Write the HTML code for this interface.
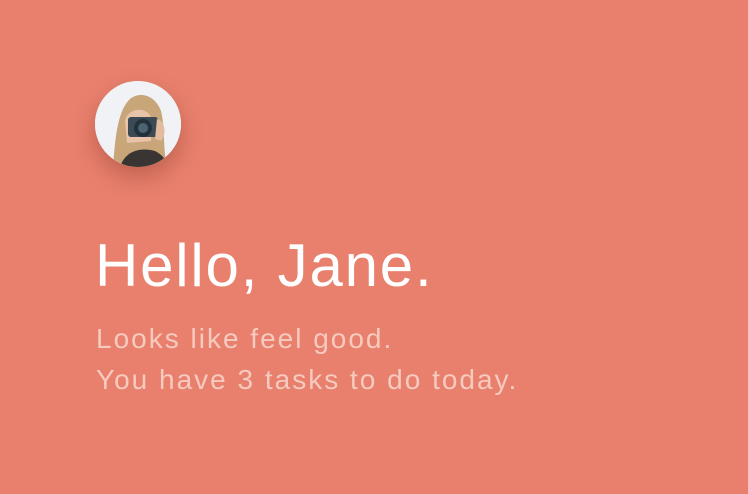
<!DOCTYPE html>
<html><head><style>
html,body{margin:0;padding:0}
body{width:748px;height:494px;background:#E8806D;position:relative;overflow:hidden;font-family:"Liberation Sans",sans-serif}
.av{position:absolute;left:95px;top:81px;width:86px;height:86px;border-radius:50%;overflow:hidden;box-shadow:0 10px 22px rgba(120,40,30,0.35);background:#eef1f4}
h1{position:absolute;left:95px;top:236px;margin:0;font-weight:normal;font-size:60px;line-height:60px;color:#fff;white-space:nowrap;letter-spacing:1.8px}
p{position:absolute;left:96px;top:318px;margin:0;font-size:28px;line-height:41px;color:#F6CABF;white-space:nowrap;letter-spacing:2px}
</style></head><body>
<div class="av">
<svg width="86" height="86" viewBox="0 0 86 86">
<rect width="86" height="86" fill="#f0f2f5"/>
<path d="M18 86 C20 60 22 30 35 18 C45 10 60 14 66 30 C70 45 68 70 72 86Z" fill="#c9a57a"/>
<path d="M30 40 C32 28 50 24 56 36 L56 60 L32 62Z" fill="#e8c3a8"/>
<path d="M25 86 C30 70 45 66 60 70 C68 74 72 80 74 86Z" fill="#3a3533"/>
<rect x="33" y="36" width="30" height="20" rx="3" fill="#3b4a55"/>
<circle cx="48" cy="47" r="9" fill="#22313a"/>
<circle cx="48" cy="47" r="5" fill="#4c6472"/>
<path d="M62 38 C70 40 72 52 66 60 L60 58Z" fill="#e3bca0"/>
</svg>
</div>
<h1>Hello, Jane.</h1>
<p>Looks like feel good.<br>You have 3 tasks to do today.</p>
</body></html>
